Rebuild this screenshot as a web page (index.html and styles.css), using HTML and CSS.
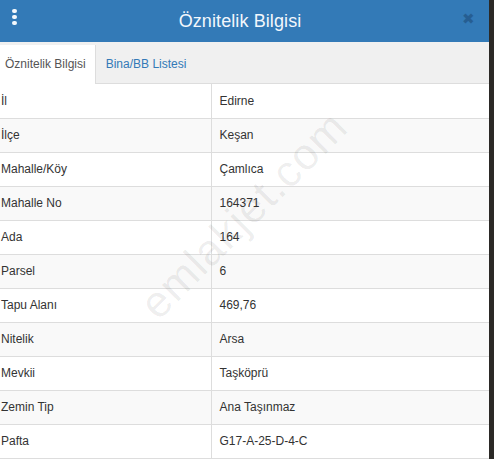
FILE: index.html
```html
<!DOCTYPE html>
<html lang="tr">
<head>
  <meta charset="UTF-8">
  <meta name="viewport" content="width=device-width, initial-scale=1.0">
  <title>Öznitelik Bilgisi</title>
  <link rel="stylesheet" href="styles.css">
</head>
<body>

<div class="panel">
  <header class="panel-head">
    <span class="menu-dots"><i></i><i></i><i></i></span>
    <h1>Öznitelik Bilgisi</h1>
    <span class="close">&#10006;</span>
  </header>

  <!-- Tabs -->
  <div class="tabs">
    <div class="tab active">Öznitelik Bilgisi</div>
    <div class="tab">Bina/BB Listesi</div>
  </div>

  <table class="attr-table">
    <tr><td>İl</td><td>Edirne</td></tr>
    <tr><td>İlçe</td><td>Keşan</td></tr>
    <tr><td>Mahalle/Köy</td><td>Çamlıca</td></tr>
    <tr><td>Mahalle No</td><td>164371</td></tr>
    <tr><td>Ada</td><td>164</td></tr>
    <tr><td>Parsel</td><td>6</td></tr>
    <tr><td>Tapu Alanı</td><td>469,76</td></tr>
    <tr><td>Nitelik</td><td>Arsa</td></tr>
    <tr><td>Mevkii</td><td>Taşköprü</td></tr>
    <tr><td>Zemin Tip</td><td>Ana Taşınmaz</td></tr>
    <tr><td>Pafta</td><td>G17-A-25-D-4-C</td></tr>
  </table>

  <div class="watermark">emlakjet.com</div>
</div>

</body>
</html>
```

FILE: styles.css
```css
body {
  margin: 0;
  padding: 0;
  background-color: #2b2926;
  font-family: 'Liberation Sans', Arial, sans-serif;
  overflow: hidden;
}

.panel {
  position: relative;
  width: 489px;
  height: 459px;
  background: #fff;
  overflow: hidden;
}

.panel-head {
  height: 42px;
  background-color: #337ab7;
  display: flex;
  align-items: center;
  justify-content: center;
  padding-right: 9px;
  box-sizing: border-box;
  position: relative;
}

.panel-head h1 {
  margin: 0;
  font-size: 18px;
  font-weight: normal;
  color: #f2f7fc;
  letter-spacing: 0.1px;
}

.menu-dots {
  position: absolute;
  left: 12px;
  top: 9px;
  display: flex;
  flex-direction: column;
  gap: 2px;
}

.menu-dots i {
  display: block;
  width: 5px;
  height: 4px;
  border-radius: 2px;
  background: #f4f8fc;
}

.close {
  position: absolute;
  right: 14px;
  top: 10px;
  font-size: 15px;
  color: #24588a;
  opacity: 0.8;
}

.tabs {
  display: flex;
  align-items: flex-end;
  height: 42px;
  background: #f0f0f0;
  border-bottom: 1px solid #dddddd;
  box-sizing: border-box;
  font-size: 12px;
}

.tab {
  height: 38px;
  line-height: 38px;
  padding: 0 10px;
  color: #337ab7;
}

.tab.active {
  background: #fff;
  color: #555;
  padding: 0 9px 0 5px;
  border-right: 1px solid #dddddd;
  height: 39px;
  margin-bottom: -1px;
}

.attr-table {
  width: 100%;
  border-collapse: collapse;
  font-size: 12px;
  color: #333;
}

.attr-table td {
  height: 34px;
  padding: 0 8px 0 0;
  border-bottom: 1px solid #dddddd;
  box-sizing: border-box;
}

.attr-table td:first-child {
  width: 211px;
  padding-left: 1px;
  border-right: 1px solid #dddddd;
}

.attr-table td:last-child {
  padding-left: 8px;
}

.attr-table tr:nth-child(even) td {
  background: #f9f9f9;
}

.watermark {
  position: absolute;
  left: 108px;
  top: 190px;
  font-size: 44px;
  color: rgba(0, 0, 0, 0.07);
  transform: rotate(-45deg);
  transform-origin: center;
  pointer-events: none;
  letter-spacing: 1px;
}
```
